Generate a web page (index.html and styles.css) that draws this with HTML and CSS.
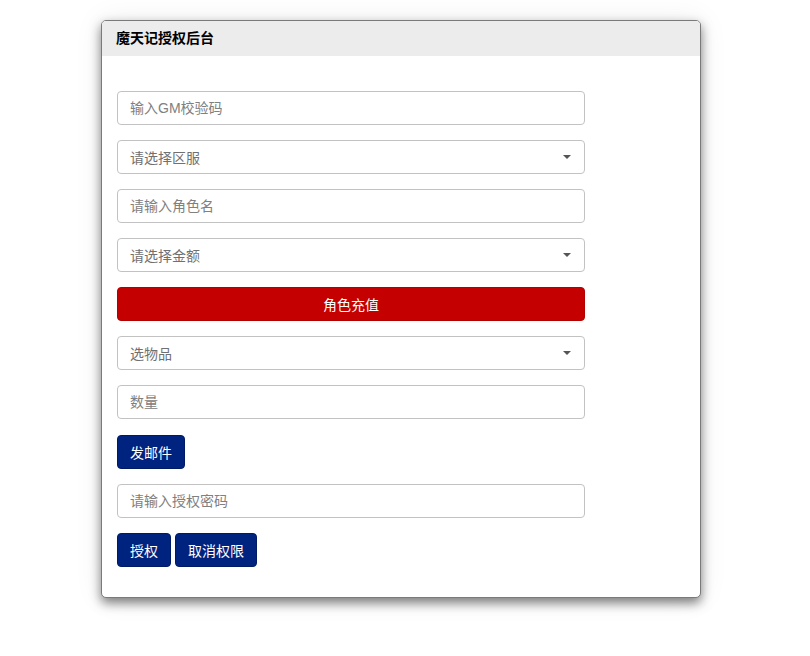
FILE: index.html
```html
<!DOCTYPE html>
<html lang="zh-CN">

<head>
  <meta charset="UTF-8">
  <meta name="viewport" content="width=device-width, initial-scale=1.0">
  <title>魔天记授权后台</title>
  <link rel="stylesheet" href="styles.css">
</head>

<body>
  <div class="panel">
    <div class="panel-heading">魔天记授权后台</div>
    <div class="panel-body">
      <input class="form-control" type="text" placeholder="输入GM校验码">
      <div class="select-box">请选择区服<span class="caret"></span></div>
      <input class="form-control" type="text" placeholder="请输入角色名">
      <div class="select-box">请选择金额<span class="caret"></span></div>
      <button class="btn btn-red">角色充值</button>
      <div class="select-box">选物品<span class="caret"></span></div>
      <input class="form-control" type="text" placeholder="数量">
      <div class="btn-row mail-row">
        <button class="btn btn-blue">发邮件</button>
      </div>
      <input class="form-control" type="password" placeholder="请输入授权密码">
      <div class="btn-row">
        <button class="btn btn-blue">授权</button>
        <button class="btn btn-blue">取消权限</button>
      </div>
    </div>
  </div>
</body>

</html>
```

FILE: styles.css
```css
html,
body {
  height: 100%;
}

body {
  box-sizing: border-box;
  margin: 0;
  padding: 20px 0 0 101px;
  background: #fff;
  font-family: "Liberation Sans", "Noto Sans CJK SC", sans-serif;
  font-size: 14px;
  color: #333;
}

.panel {
  width: 598px;
  border: 1px solid #7a7a7a;
  border-radius: 5px;
  background: #fff;
  box-shadow: 0 5px 11px rgba(0, 0, 0, 0.5), 0 0 30px rgba(0, 0, 0, 0.07);
  overflow: hidden;
}

.panel-heading {
  height: 35px;
  line-height: 35px;
  padding-left: 14px;
  background: #ececec;
  font-weight: bold;
  font-size: 14px;
  color: #000;
}

.panel-body {
  padding: 35px 15px 30px 15px;
  display: flex;
  flex-direction: column;
  gap: 15px;
}

.form-control,
.select-box {
  box-sizing: border-box;
  width: 468px;
  height: 34px;
  padding: 0 12px;
  border: 1px solid #c2c2c2;
  border-radius: 4px;
  background: #fff;
  font-family: inherit;
  font-size: 14px;
  color: #555;
  outline: none;
}

.form-control::placeholder {
  color: #808080;
}

.select-box {
  display: flex;
  align-items: center;
  justify-content: space-between;
  color: #707070;
}

.caret {
  width: 0;
  height: 0;
  margin-right: 1px;
  border-left: 4px solid transparent;
  border-right: 4px solid transparent;
  border-top: 4px solid #555;
}

.btn {
  box-sizing: border-box;
  height: 34px;
  padding: 0 12px;
  border-radius: 4px;
  font-family: inherit;
  font-size: 14px;
  color: #fff;
  cursor: pointer;
}

.btn-red {
  width: 468px;
  background: #c40000;
  border: 1px solid #b30000;
}

.btn-blue {
  background: #00237f;
  border: 1px solid #001a66;
}

.btn-row {
  display: flex;
  gap: 4px;
}

.mail-row {
  margin-top: 1px;
}
```
